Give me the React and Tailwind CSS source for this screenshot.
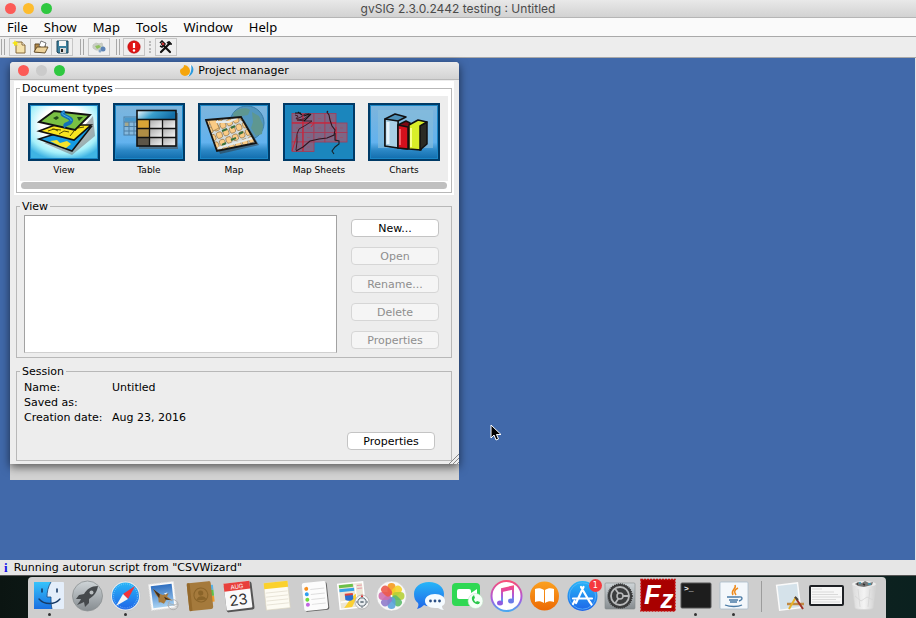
import React, { useState } from 'react'

const menus = ['File', 'Show', 'Map', 'Tools', 'Window', 'Help']

/* ---------- document type pictures (72 x 58) ---------- */

const Frame = ({ children, fill }) => (
    <svg viewBox="0 0 72 58" className="block w-full h-[58px]" aria-hidden="true">
        <defs>
            <radialGradient id="glow" cx="0.5" cy="0.35" r="0.7">
                <stop offset="0.5" stopColor="#fff" />
                <stop offset="0.8" stopColor="#a5f0fa" />
                <stop offset="1" stopColor="#3fb4e4" />
            </radialGradient>
            <linearGradient id="sky" x1="0" y1="0" x2="0" y2="1">
                <stop offset="0" stopColor="#7db5dc" />
                <stop offset="0.7" stopColor="#62b2ee" />
                <stop offset="0.86" stopColor="#2a86c4" />
                <stop offset="1" stopColor="#1470b0" />
            </linearGradient>
        </defs>
        <rect width="72" height="58" fill="#003a66" />
        <rect x="2" y="2" width="68" height="54" fill="#1a86c6" />
        <rect x="3" y="3" width="66" height="52" fill={fill} />
        {children}
    </svg>
)

const ViewPicture = () => (
    <Frame fill="url(#glow)">
        <path d="M16 40 L44 52 L67 33 L65 13 L50 30Z" fill="#777" opacity="0.55" />
        <path d="M11 36 L27 31 L63 24 L44 48Z" fill="#159be3" stroke="#111" strokeWidth="1.6" />
        <path d="M22 38l7-1 3 3 7-2 4 3-5 4-6-2z" fill="#f6e32b" />
        <path d="M11 28 L27 22 L63 22 L46 37Z" fill="#f8e520" stroke="#111" strokeWidth="1.6" />
        <path d="M20 28l6-2 4 2M31 31l5-3 5 1M42 33l4-5M24 26l9 1M50 25l6-1" stroke="#554c00" strokeWidth="1" fill="none" />
        <path d="M11 19 L26 8 L62 12 L47 27Z" fill="#79c043" stroke="#111" strokeWidth="1.8" />
        <path d="M37 9 C28 12 45 14 43 18 C42 22 35 20 38 24" fill="none" stroke="#1370b8" strokeWidth="4" />
        <path d="M36 9 C29 12 45 14 43 18" fill="none" stroke="#48b4ec" strokeWidth="1" />
        <path d="M25 15l4-2 2 2-3 2zM49 14l6 0-4 4z" fill="#234c1b" />
    </Frame>
)

const TablePicture = () => (
    <Frame fill="url(#sky)">
        <g opacity="0.75">
            <rect x="11" y="14" width="14" height="18" fill="#8fbbdb" stroke="#426c8d" />
            <rect x="11.5" y="14.500" width="13" height="4" fill="#3c8fc4" />
            <rect x="12" y="19" width="4" height="5" fill="#b9a671" />
            <path d="M11 19h14M11 23.500h14M11 28h14M16 19v13M21 19v13" stroke="#426c8d" />
        </g>
        <rect x="26" y="10" width="39" height="36" fill="#555" opacity="0.6" />
        <linearGradient id="head" x1="0" x2="1" y1="0" y2="0.3">
            <stop offset="0" stopColor="#fff" />
            <stop offset="0.5" stopColor="#3aa0cd" />
            <stop offset="1" stopColor="#1470a8" />
        </linearGradient>
        <linearGradient id="cell" x1="0" x2="1" y1="0" y2="1">
            <stop offset="0" stopColor="#aaa" />
            <stop offset="1" stopColor="#f4f4f4" />
        </linearGradient>
        <rect x="24" y="7" width="39" height="36" fill="#ddd" />
        <rect x="24" y="7" width="39" height="9" fill="url(#head)" />
        <rect x="24" y="16" width="13" height="9" fill="#d9a436" />
        <rect x="24" y="25" width="13" height="9" fill="#b08d45" />
        <rect x="24" y="34" width="13" height="9" fill="#5d5548" />
        {[37, 49].map((x) => [16, 25, 34].map((y) => (
            <rect key={`${x}-${y}`} x={x} y={y} width="13" height="9" fill="url(#cell)" />
        )))}
        <path d="M24 16.500h39M24 25.500h39M24 34.500h39M36.500 16v27M49.500 16v27" stroke="#111" strokeWidth="1.3" />
        <rect x="24" y="7.500" width="39" height="35.500" fill="none" stroke="#111" strokeWidth="1.6" />
    </Frame>
)

const MapPicture = () => (
    <Frame fill="url(#sky)">
        <circle cx="49" cy="20" r="17" fill="#5296bd" stroke="#3b7da6" />
        <path d="M35 10c5-5 14-6 17-3l-2 5-6 1-2 5-5 1zM54 9l7 4 4 9-1 9-6 2-5-8 2-6zM50 27l5 4-3 6z" fill="#5e9791" />
        <clipPath id="sheet"><path d="M8 17L43 14L58 40L19 48Z" /></clipPath>
        <path d="M12 21L46 17L61 42L22 51Z" fill="#333" opacity="0.5" />
        <path d="M8 17L43 14L58 40L19 48Z" fill="#d3dadb" />
        <g clipPath="url(#sheet)">
            <g transform="rotate(-22 32 31)" fill="#fbcb85" stroke="#96784c" strokeWidth="0.700">
                {[0, 1, 2, 3, 4, 5].map((r) => [0, 1, 2, 3, 4, 5, 6, 7].map((c) => (
                    <rect key={`${r}-${c}`} x={5 + c * 7} y={9 + r * 8} width="5.600" height="6.200" rx="2" />
                )))}
            </g>
            <path d="M10 16l8 1 3 8-6 3z" fill="#fbcb85" stroke="#96784c" strokeWidth="0.700" />
            <path d="M24 28l5-2M33 25l4-2M41 31l4-2M24 42l4-2M33 37l5-2" stroke="#39713c" strokeWidth="2" />
            <path d="M20 45L55 35M18 19l13 0 8-4" fill="none" stroke="#e5eaea" strokeWidth="2" />
        </g>
        <path d="M8 17L43 14L58 40L19 48Z" fill="none" stroke="#151515" strokeWidth="1.800" />
    </Frame>
)

const SheetsPicture = () => {
    const rows = [4, 5, 5, 2]
    return (
        <Frame fill="#1b86bd">
            {rows.map((count, r) => Array.from({ length: count }, (_, c) => (
                <g key={`${r}-${c}`}>
                    <rect x={9 + c * 11} y={10.5 + r * 9.5} width="11" height="9.500" fill="#7d6685" stroke="#a83a55" strokeWidth="0.8" />
                    <path d={`M${13 + c * 11} ${15.5 + r * 9.5}h3`} stroke="#a04f66" strokeWidth="0.7" />
                </g>
            )))}
            <path d="M9 20h44M20 11v37M31 20l-3 4M53 24v14M9 48l5-16" fill="none" stroke="#d61f32" strokeWidth="1" />
            <path d="M12 12l3 1-2 3 5-2 4-3 5 0-6 5-7 1 8 1 7 0-6 4-7 4-2 5 0 8-1 8" fill="none" stroke="#431c29" strokeWidth="1" />
            <path d="M12 10h6M15 9l4 3M21 13l5-2M28 11l-7 7" fill="none" stroke="#111" strokeWidth="1.1" />
            <path d="M13 48l7-4 7-6 9-2 8-1 7-3 1-5-3-4-2-6-1-5-2-3 1-1" fill="none" stroke="#30141e" strokeWidth="1.1" />
            <path d="M52 30v7l4 1 0 3-4 3-3 4 2 3" fill="none" stroke="#172027" strokeWidth="1.1" />
        </Frame>
    )
}

const ChartsPicture = () => (
    <Frame fill="url(#sky)">
        <rect x="10" y="7" width="55" height="38" fill="#86bcdc" opacity="0.7" />
        <g stroke="#111" strokeWidth="1.500" strokeLinejoin="round">
            <path d="M17 16l10-5 11 3-8 4v26l-13-1z" fill="#4f91b8" />
            <path d="M17 16l13 2v27l-13-2z" fill="#a9cfe5" />
            <path d="M30 22l8-4 4 2-2 26-10-1z" fill="#7d0912" />
            <path d="M30 22l10 2v22l-10-1z" fill="#d3101c" />
            <path d="M41 22l9-5 9 2-6 4v24l-12-1z" fill="#d9ee28" />
            <path d="M52 23l7-4v22l-7 6z" fill="#2b2b24" />
        </g>
        <path d="M20 19v22" stroke="#e6f3fb" strokeWidth="3" />
        <path d="M43 25v19" stroke="#f7ff8b" strokeWidth="2" />
        <path d="M32 26v16" stroke="#ff7078" strokeWidth="1.500" />
    </Frame>
)

const documentTypes = [
    { name: 'View', Picture: ViewPicture },
    { name: 'Table', Picture: TablePicture },
    { name: 'Map', Picture: MapPicture },
    { name: 'Map Sheets', Picture: SheetsPicture },
    { name: 'Charts', Picture: ChartsPicture },
]

/* ---------- toolbar ---------- */

const ToolIcon = ({ children }) => (
    <svg viewBox="0 0 16 14" className="w-4 h-[14px]" aria-hidden="true">{children}</svg>
)

const ToolButton = ({ label, children }) => (
    <button aria-label={label} className="flex items-center justify-center w-[22px] h-[18px] -mr-px border border-[#c6c6c6] bg-[#efefef]">
        <ToolIcon>{children}</ToolIcon>
    </button>
)

const Handle = () => <span className="w-1 h-4 border-x border-[#a8a8a8]" />

const Toolbar = () => (
    <div className="flex items-center h-[22px] pl-px border-y border-[#a9a9a9] bg-[#ededed]">
        <Handle />
        <div className="flex ml-1 mr-2">
            <ToolButton label="New project">
                <path d="M4 2h6l3 3v8H4z" fill="#f6e2ab" stroke="#85693a" />
                <path d="M10 2v3h3" fill="#fff" stroke="#85693a" />
                <path d="M3 0l1 2 2 0-1 2 1 2-2-1-2 1 0-2-2-1 2-1z" fill="#f5e416" />
            </ToolButton>
            <ToolButton label="Open project">
                <path d="M2 12V4h4l1 1h5v7z" fill="#b48b4a" stroke="#5f4724" />
                <path d="M6 6l2-5 5 2-2 6z" fill="#fff" stroke="#555" strokeWidth="0.8" />
                <path d="M1 12l3-5h11l-3 6z" fill="#edd29a" stroke="#5f4724" strokeWidth="0.9" />
            </ToolButton>
            <ToolButton label="Save project">
                <path d="M3 1h11v12H4l-1-1z" fill="#3a7f9d" stroke="#1f4459" />
                <rect x="5" y="1" width="7" height="5" fill="#f5f5f5" />
                <rect x="6" y="8" width="6" height="5" fill="#dadada" />
                <rect x="7" y="9" width="2" height="3" fill="#222" />
            </ToolButton>
        </div>
        <Handle />
        <div className="flex ml-1 mr-[7px]">
            <ToolButton label="Add-ons">
                <path d="M2 5l3-2 3 1 3-1 1 4-2 3-5 0-3-2z" fill="#c9cdc4" stroke="#c5cac0" />
                <path d="M4 6l4-1 2 2-4 2z" fill="#8fc15e" />
                <circle cx="12" cy="9" r="2.500" fill="#5b82b5" />
                <circle cx="9" cy="11" r="1.500" fill="#86a5c8" />
            </ToolButton>
        </div>
        <Handle />
        <div className="flex ml-[3px]">
            <ToolButton label="Show errors">
                <circle cx="8" cy="7" r="6.200" fill="#e01414" stroke="#b00909" strokeWidth="0.600" />
                <path d="M8 3v5" stroke="#fff" strokeWidth="2.200" />
                <circle cx="8" cy="10.500" r="1.200" fill="#fff" />
            </ToolButton>
        </div>
        <span className="w-px h-3 ml-[5px] mr-1 border-l-2 border-dotted border-[#bbb]" />
        <ToolButton label="Preferences">
            <path d="M4 4l8 8M12 3l-9 9" stroke="#111" strokeWidth="2.200" strokeLinecap="round" />
            <path d="M2 3l2-2 3 3-3 3-2-1M11 1l0 3 3 0M9 2l2 2" stroke="#111" strokeWidth="1.500" fill="none" />
            <circle cx="5" cy="4" r="1.300" fill="#c33" />
        </ToolButton>
    </div>
)

/* ---------- window parts ---------- */

const Lights = ({ middle }) => (
    <div className="flex gap-[7px]">
        <button aria-label="Close" className="w-[11px] h-[11px] rounded-full bg-[#fc5b57]" />
        <button aria-label="Minimize" className={`w-[11px] h-[11px] rounded-full ${middle}`} />
        <button aria-label="Zoom" className="w-[11px] h-[11px] rounded-full bg-[#2fc840]" />
    </div>
)

const PushButton = ({ children, disabled }) => (
    <button
        disabled={disabled}
        className="w-[88px] h-[18px] pt-px rounded-[4px] border border-[#c4c4c4] bg-white text-[11px] leading-[15px] text-black disabled:border-[#d6d6d6] disabled:bg-[#f5f5f5] disabled:text-[#8e8e8e]"
    >
        {children}
    </button>
)

const Group = ({ title, className, children }) => (
    <fieldset className={`min-w-0 border border-[#b8b8b8] ${className}`}>
        <legend className="ml-[3px] px-[2px] pt-[2px] text-[11px] leading-3">{title}</legend>
        {children}
    </fieldset>
)

const ProjectManager = () => {
    const [selected, setSelected] = useState('View')

    return (
        <section className="w-[449px] rounded-t-[4px] bg-[#d2d2d2] pb-4">
            <div className="relative rounded-t-[4px] bg-[#ededed] shadow-[0_3px_10px_rgba(0,0,0,0.6)]">
                <header className="grid grid-cols-[1fr_auto_1fr] items-center h-[18px] px-2 rounded-t-[4px] border-b border-[#b9b9b9] bg-linear-to-b from-[#ebebeb] to-[#d3d3d3]">
                    <Lights middle="bg-[#cbcbcb]" />
                    <h2 className="flex items-center gap-1 text-[11px] leading-4">
                        <svg viewBox="0 0 14 13" className="w-[14px] h-[13px]" aria-hidden="true">
                            <path d="M4 1c3 0 6 3 6 6a5 5 0 0 1-10 0c0-3 4-2 4-6z" fill="#f5a50c" />
                            <path d="M10 1c2 3 1 5 1 7s-1 3-3 4" fill="none" stroke="#fff" strokeWidth="1" />
                            <path d="M11 1c4 3 3 9-3 12 3-4 4-8 3-12z" fill="#2b9ade" />
                        </svg>
                        Project manager
                    </h2>
                </header>

                <div className="ml-1 mr-[5px] mt-px px-[2px] pb-[2px] bg-white">
                    <Group title="Document types" className="pb-[3px]">
                        <div className="mx-[3px]">
                            <div className="grid grid-cols-5 gap-[13px] h-[85px] mt-px px-2 pt-[7px] bg-[#ededed]">
                                {documentTypes.map(({ name, Picture }) => (
                                    <button
                                        key={name}
                                        aria-pressed={selected === name}
                                        onClick={() => setSelected(name)}
                                        className="self-start text-[9px] leading-[18px]"
                                    >
                                        <Picture />
                                        {name}
                                    </button>
                                ))}
                            </div>
                            <div className="h-[7px] mx-px mt-px rounded-full bg-[#c0c0c0]" />
                        </div>
                    </Group>
                </div>

                <div className="pl-[6px] pr-[7px] pt-1 pb-[3px]">
                    <Group title={selected} className="pb-1">
                        <div className="flex gap-[14px] pl-[7px] pr-3 -mt-px">
                            <ul aria-label="Documents" className="flex-1 h-[138px] mt-[3px] border border-[#a2a2a2] border-b-[#d0d0d0] bg-white" />
                            <div className="flex flex-col gap-[10px] pt-[7px]">
                                <PushButton>New...</PushButton>
                                <PushButton disabled>Open</PushButton>
                                <PushButton disabled>Rename...</PushButton>
                                <PushButton disabled>Delete</PushButton>
                                <PushButton disabled>Properties</PushButton>
                            </div>
                        </div>
                    </Group>

                    <Group title="Session" className="mt-[6px] pb-[10px]">
                        <dl className="grid grid-cols-[88px_1fr] mt-[2px] pl-[7px] text-[11px] leading-[15px]">
                            <dt>Name:</dt>
                            <dd>Untitled</dd>
                            <dt>Saved as:</dt>
                            <dd />
                            <dt>Creation date:</dt>
                            <dd>Aug 23, 2016</dd>
                        </dl>
                        <div className="flex justify-end mt-[7px] pr-4">
                            <PushButton>Properties</PushButton>
                        </div>
                    </Group>
                </div>
                <svg viewBox="0 0 10 10" className="absolute right-0 bottom-0 w-[10px] h-[10px]" aria-hidden="true">
                    <path d="M0 10L10 0M4 10l6-6M8 10l2-2" stroke="#888" />
                </svg>
            </div>
        </section>
    )
}

/* ---------- dock ---------- */

const petals = ['#f59a1f', '#f4d32a', '#b5cf38', '#5dbb6c', '#5ba3dc', '#8f7ccb', '#cf6fae', '#ec5a4c']

const dockApps = [
    {
        name: 'Finder', running: true, art: (
            <>
                <rect x="4" y="5" width="30" height="27" rx="1" fill="#e4eefa" />
                <path d="M4 5h17c-3 5-4 10-4 15h4c0 4 0 8 1 12H4z" fill="url(#finder)" />
                <path d="M12 12v3M27 12v3" stroke="#173a66" strokeWidth="1.600" strokeLinecap="round" />
                <path d="M9 22c5 6 16 6 21 0" fill="none" stroke="#173a66" strokeWidth="1.300" strokeLinecap="round" />
                <path d="M21 5c-3 5-4 10-4 15h4c0 4 0 8 1 12" fill="none" stroke="#1b4a80" strokeWidth="0.800" />
            </>
        ),
    },
    {
        name: 'Launchpad', art: (
            <>
                <circle cx="19.500" cy="19" r="15" fill="url(#silver)" stroke="#8b9092" strokeWidth="0.800" />
                <path d="M30 9c-7 0-11 3-14 8l-5 1-3 4 5 0-1 2-3 4 5-2 2-1 1 5 4-4 0-4c5-3 8-7 9-13z" fill="#45494c" />
                <circle cx="23.500" cy="15.500" r="2" fill="#b8bdbf" />
            </>
        ),
    },
    {
        name: 'Safari', running: true, art: (
            <>
                <circle cx="19.500" cy="19" r="15" fill="#e9ecee" stroke="#b5b8ba" strokeWidth="0.500" />
                <circle cx="19.500" cy="19" r="13.500" fill="url(#blue)" />
                <circle cx="19.500" cy="19" r="12" fill="none" stroke="#8fd0fb" strokeWidth="1.200" strokeDasharray="0.500 1.500" />
                <path d="M29 9L17 17l5 5z" fill="#f2333a" />
                <path d="M10 29l7-12 5 5z" fill="#f4f4f4" />
            </>
        ),
    },
    {
        name: 'Mail', art: (
            <g transform="rotate(-7 18 19)">
                <rect x="6" y="6" width="25" height="26" fill="#fbfbfb" stroke="#e5e5e5" strokeWidth="1" strokeDasharray="1.500 1" />
                <rect x="8" y="8" width="21" height="22" fill="url(#mail)" />
                <path d="M10 11l5 5 4 2 6-1-2 3 5 5-6-2-3 4-3-2-2 0 0-5-2-3z" fill="#a77a3c" />
                <path d="M10 11l6 6-1 4zM20 20l6 4-5-1z" fill="#3e2b18" />
                <path d="M20 17l4-1-2 2z" fill="#fff" />
                <circle cx="28" cy="29" r="5" fill="none" stroke="#aaa" strokeWidth="0.800" />
                <path d="M22 29h11M23 26l9 6" stroke="#aaa" strokeWidth="0.600" />
            </g>
        ),
    },
    {
        name: 'Contacts', art: (
            <g transform="rotate(-6 19 19)">
                <path d="M28 9h4v5h-4z" fill="#58b3e8" />
                <path d="M28 14h4v6h-4z" fill="#5bc24d" />
                <path d="M28 20h4v6h-4z" fill="#f19b2c" />
                <rect x="6" y="5" width="24" height="28" rx="2" fill="#a57a3c" />
                <rect x="6" y="5" width="3" height="28" rx="1" fill="#94692c" />
                <circle cx="19" cy="18" r="7" fill="none" stroke="#8a6429" strokeWidth="1" />
                <circle cx="19" cy="16" r="2.600" fill="#8a6429" />
                <path d="M14 23c1-5 9-5 10 0z" fill="#8a6429" />
            </g>
        ),
    },
    {
        name: 'Calendar', art: (
            <g transform="rotate(-7 19 19)">
                <rect x="5" y="6" width="28" height="28" rx="2" fill="#555" />
                <rect x="5" y="5" width="26" height="27" rx="1" fill="#fafafa" />
                <path d="M5 5h26v8H5z" fill="#e8403c" />
                <text x="18" y="11.500" fontSize="6" textAnchor="middle" fill="#fff" fontFamily="Inter, sans-serif">AUG</text>
                <text x="18" y="28" fontSize="15" textAnchor="middle" fill="#333" fontFamily="Inter, sans-serif">23</text>
            </g>
        ),
    },
    {
        name: 'Notes', art: (
            <g transform="rotate(-6 19 19)">
                <rect x="7" y="5" width="24" height="27" fill="#fdfbf3" stroke="#d8d2bd" strokeWidth="0.600" />
                <rect x="7" y="5" width="24" height="6" fill="#fbd12c" />
                <path d="M8 15h22M8 19h22M8 23h22M8 27h22" stroke="#e3dfd1" strokeWidth="0.800" />
            </g>
        ),
    },
    {
        name: 'Reminders', art: (
            <g transform="rotate(-6 19 19)">
                <rect x="8" y="6" width="24" height="28" rx="2" fill="#666" />
                <rect x="7" y="5" width="24" height="28" rx="2" fill="#fcfcfc" />
                <path d="M15 12h14M15 17h14M15 22h14M15 27h14" stroke="#ddd" />
                <circle cx="11" cy="11" r="2" fill="#f78f1e" />
                <circle cx="11" cy="16.500" r="2" fill="#2f9ff0" />
                <circle cx="11" cy="22" r="2" fill="#6fdc3c" />
                <circle cx="11" cy="27" r="2" fill="#c067e2" />
            </g>
        ),
    },
    {
        name: 'Maps', art: (
            <>
                <g transform="rotate(-6 18 19)">
                    <rect x="5" y="6" width="25" height="25" fill="#ece6d6" stroke="#fff" strokeWidth="1.500" />
                    <path d="M6 7h14v3H6z" fill="#6cc04a" />
                    <path d="M6 11h15v3H6z" fill="#38a3e6" />
                    <path d="M22 8v22M6 24h24" stroke="#fff" strokeWidth="1.500" />
                    <path d="M17 21l5-4v5l-5 8H9z" fill="#fbd034" />
                    <path d="M11 17h8v5c-2 2-6 2-8 0z" fill="#2b6fd0" />
                    <path d="M11 16h8v2h-8z" fill="#e0423a" />
                    <path d="M24 9h5M24 12h5" stroke="#e999a9" strokeWidth="1" />
                </g>
                <circle cx="28" cy="25" r="7" fill="#f3f3f3" stroke="#999" strokeWidth="0.600" />
                <circle cx="28" cy="25" r="4.200" fill="#e9edf0" stroke="#4d5b66" />
                <path d="M28 19v1M22 25h1M34 25h-1M28 31v-1M26 25h4M28 24v2" stroke="#4d5b66" strokeWidth="0.900" />
                <path d="M28 17l1 3h-2z" fill="#d22" />
            </>
        ),
    },
    {
        name: 'Photos', art: (
            <>
                <circle cx="19.500" cy="19" r="15" fill="#f8f8f8" stroke="#c5c5c5" strokeWidth="0.600" />
                {petals.map((color, i) => (
                    <rect key={color} x="15.500" y="6" width="8" height="12" rx="4" fill={color} opacity="0.9" transform={`rotate(${i * 45} 19.500 19)`} />
                ))}
            </>
        ),
    },
    {
        name: 'Messages', art: (
            <>
                <path d="M19 5c9 0 15 5 15 12s-6 12-15 12c-2 0-3 0-5-1-2 2-4 3-7 4 1-2 2-4 1-6-3-2-4-5-4-9C4 10 10 5 19 5z" fill="url(#blue)" />
                <path d="M25 17c6 0 10 3 10 7 0 3-1 4-3 5 0 2 1 3 2 4-2 0-4-1-6-2h-3c-6 0-10-3-10-7s4-7 10-7z" fill="#f5fbff" />
                <circle cx="20.500" cy="24" r="1.400" fill="#2a4f86" />
                <circle cx="25" cy="24" r="1.400" fill="#2a4f86" />
                <circle cx="29.500" cy="24" r="1.400" fill="#2a4f86" />
            </>
        ),
    },
    {
        name: 'FaceTime', art: (
            <>
                <rect x="3" y="6" width="28" height="23" rx="4" fill="#2fd853" />
                <rect x="8" y="12" width="14" height="10" rx="2" fill="#fff" />
                <path d="M22 16l6-4v10l-6-4z" fill="#fff" />
                <circle cx="26.500" cy="24" r="7.500" fill="#f5fff7" stroke="#b9dcc0" strokeWidth="0.500" />
                <path d="M23 20c-1 4 3 8 7 7l1-2-3-1-1 1c-1 0-2-2-2-3l1-1-1-3z" fill="#2cc84c" />
            </>
        ),
    },
    {
        name: 'iTunes', art: (
            <>
                <circle cx="19.500" cy="19" r="15" fill="#fff" stroke="url(#tunes)" strokeWidth="2" />
                <path d="M15 25V12l11-2.500V23" fill="none" stroke="url(#tunes)" strokeWidth="2" />
                <path d="M15 13.500l11-2.500" stroke="#e8489b" strokeWidth="3" />
                <ellipse cx="13" cy="26" rx="3" ry="2.500" fill="#8e5be0" />
                <ellipse cx="24" cy="24" rx="3" ry="2.500" fill="#6a7be8" />
            </>
        ),
    },
    {
        name: 'iBooks', art: (
            <>
                <circle cx="19.500" cy="19" r="14.500" fill="url(#orange)" />
                <path d="M19 13c-3-2-6-2-9-1v13c3-1 6-1 9 1zM20 13c3-2 6-2 9-1v13c-3-1-6-1-9 1z" fill="#fff" />
            </>
        ),
    },
    {
        name: 'App Store', badge: 1, art: (
            <>
                <circle cx="19.500" cy="19" r="15" fill="url(#blue)" />
                <circle cx="19.500" cy="19" r="13.200" fill="none" stroke="#5db4f7" strokeWidth="0.800" />
                <path d="M20.500 10L13 26M18 10l9 15.500M10 21.500h19M11.500 24l-1.500 3M27 25l1.500 2.500" stroke="#fff" strokeWidth="2.200" strokeLinecap="round" />
            </>
        ),
    },
    {
        name: 'System Preferences', art: (
            <>
                <rect x="4" y="6" width="30" height="26" rx="1" fill="url(#silver)" stroke="#84898b" strokeWidth="0.600" />
                <circle cx="19" cy="19" r="12" fill="#3b3d3e" stroke="#333" strokeWidth="1.500" strokeDasharray="1 1" />
                <circle cx="19" cy="19" r="9" fill="none" stroke="#b7b9ba" strokeWidth="1.800" />
                <circle cx="19" cy="19" r="3" fill="none" stroke="#b7b9ba" strokeWidth="1.500" />
                <path d="M22 19h6M17.500 21.500l-3.500 5M17.500 16.500l-3.500-5" stroke="#b7b9ba" strokeWidth="1.800" />
            </>
        ),
    },
    {
        name: 'FileZilla', art: (
            <>
                <rect x="2" y="2.500" width="34" height="31.500" fill="#a80000" stroke="#c40f0f" strokeWidth="1.500" strokeDasharray="2 1" />
                <text x="5" y="27" fontSize="27" fontWeight="700" fontStyle="italic" fill="#fff" fontFamily="'Liberation Sans', sans-serif">
                    F<tspan dy="4" fontSize="26">z</tspan>
                </text>
            </>
        ),
    },
    {
        name: 'Terminal', running: true, art: (
            <>
                <rect x="4" y="6" width="30" height="25" rx="1" fill="#1d1d1d" stroke="#555" strokeWidth="1" />
                <text x="7" y="14" fontSize="8" fontWeight="700" fill="#eee" fontFamily="'Liberation Mono', monospace">&gt;_</text>
            </>
        ),
    },
    {
        name: 'Java', running: true, art: (
            <>
                <rect x="5" y="5" width="28" height="27" rx="1" fill="#f3f7fb" stroke="#a9bccb" strokeWidth="0.800" />
                <path d="M20 8c2 4-5 5-2 10M23 11c-4 2-4 4-2 7" fill="none" stroke="#ee8a1c" strokeWidth="1.500" />
                <path d="M12 20h12M14 23h9M15 25h7M10 28c5 2 13 2 17 0M24 20c4-1 4 3 0 4" fill="none" stroke="#4a7ba6" strokeWidth="1.300" />
            </>
        ),
    },
]

const dockFiles = [
    {
        name: 'Applications', art: (
            <>
                <rect x="8" y="7" width="21" height="25" fill="#d5e2ea" stroke="#fafafa" strokeWidth="1.500" transform="rotate(-7 19 19)" />
                <path d="M17 27h17" stroke="#c08a45" strokeWidth="2.500" />
                <path d="M25 20l8 12" stroke="#9e3226" strokeWidth="2" />
                <path d="M26 20l-7 12" stroke="#e6b12a" strokeWidth="2" />
                <path d="M25 20l3 3" stroke="#444" strokeWidth="2" />
            </>
        ),
    },
    {
        name: 'Minimized window', art: (
            <>
                <rect x="2" y="9" width="33" height="19" rx="1" fill="#f7f7f7" stroke="#1d2024" strokeWidth="2" />
                <path d="M4 12h10M4 15h22M4 17.500h26M4 20h29M4 22.500h24M4 25h28" stroke="#d2d2d2" strokeWidth="0.800" />
            </>
        ),
    },
    {
        name: 'Trash', art: (
            <>
                <path d="M6 7h24l-3 24c-1 2-17 2-18 0z" fill="url(#trash)" stroke="#d5d5d5" strokeWidth="0.600" />
                <path d="M12 12l2 18M24 12l-2 18M9 19l6 5 6-4 6 3" stroke="#d3d3d3" strokeWidth="0.700" fill="none" />
                <ellipse cx="18" cy="7" rx="12" ry="3" fill="#eee" />
                <path d="M9 7l3-2 4 1 3-2 4 2 4-1-1 3-8 2-6-1z" fill="#777" />
                <path d="M13 6l2 0M22 7h3" stroke="#3c9bb5" strokeWidth="1.500" />
                <path d="M17 7l2 1M11 7h1" stroke="#333" strokeWidth="1.500" />
            </>
        ),
    },
]

const DockItem = ({ name, art, running, badge }) => (
    <button aria-label={name} className="relative flex-1 flex flex-col items-center">
        <svg viewBox="0 0 38 36" className="w-[38px] h-9" aria-hidden="true">{art}</svg>
        {running && <span className="w-[3px] h-[3px] rounded-full bg-[#333]" />}
        {badge && (
            <span className="absolute -right-px top-[2px] w-[13px] h-[13px] rounded-full bg-[#f5393d] text-white text-[8px] leading-[13px]">
                {badge}
            </span>
        )}
    </button>
)

const Dock = () => (
    <div className="bg-[linear-gradient(90deg,#0b1512,#14221f_20%,#14221f_80%,#0b211f)] pl-7 pr-[30px] pt-px">
        <svg className="absolute w-0 h-0" aria-hidden="true">
            <defs>
                <linearGradient id="finder" x2="0" y2="1"><stop stopColor="#35c3fb" /><stop offset="1" stopColor="#1a6fe0" /></linearGradient>
                <linearGradient id="silver" x2="0" y2="1"><stop stopColor="#cfd5d8" /><stop offset="1" stopColor="#868c90" /></linearGradient>
                <linearGradient id="blue" x2="0" y2="1"><stop stopColor="#27b6f8" /><stop offset="1" stopColor="#1f65e8" /></linearGradient>
                <linearGradient id="mail" x2="0" y2="1"><stop stopColor="#2f6fc0" /><stop offset="1" stopColor="#a8d2f2" /></linearGradient>
                <linearGradient id="tunes" x2="0" y2="1"><stop stopColor="#f84f78" /><stop offset="0.6" stopColor="#a95ae0" /><stop offset="1" stopColor="#4aa8f0" /></linearGradient>
                <linearGradient id="orange" x2="0" y2="1"><stop stopColor="#fba01f" /><stop offset="1" stopColor="#ec6a05" /></linearGradient>
                <linearGradient id="trash" x2="1" y2="0"><stop stopColor="#dadada" /><stop offset="0.5" stopColor="#f4f4f4" /><stop offset="1" stopColor="#cfcfcf" /></linearGradient>
            </defs>
        </svg>
        <nav aria-label="Dock" className="flex h-[41px] px-[2px] rounded-t-[4px] bg-[#cecece]">
            {dockApps.map((app) => <DockItem key={app.name} {...app} />)}
            <span className="w-px h-[31px] mx-2 mt-1 bg-[#9c9c9c]" />
            {dockFiles.map((file) => <DockItem key={file.name} {...file} />)}
        </nav>
    </div>
)

export default function App() {
    return (
        <div className="flex flex-col min-h-screen bg-[#ededed] font-['DejaVu_Sans',sans-serif] text-black">
            <header className="grid grid-cols-[1fr_auto_1fr] items-center h-[18px] px-[5px] border-b border-[#b5b5b5] bg-linear-to-b from-[#e9e9e9] to-[#d2d2d2]">
                <Lights middle="bg-[#fdbc2e]" />
                <h1 className="font-[Inter,sans-serif] text-[12px] leading-4 text-[#4a4a4a]">gvSIG 2.3.0.2442 testing : Untitled</h1>
            </header>
            <nav className="flex items-center gap-4 h-[18px] px-[7px] bg-[#fafafa] font-['Noto_Sans',sans-serif] text-[13px] leading-[18px]">
                {menus.map((menu) => <button key={menu}>{menu}</button>)}
            </nav>
            <Toolbar />

            <main className="relative flex-1 pl-[10px] pt-1 pb-10 border-r border-[#e4e4e4] bg-[#4169aa]">
                <ProjectManager />
                <svg viewBox="0 0 12 17" className="absolute left-[490px] top-[366px] w-3 h-[17px]" aria-hidden="true">
                    <path d="M1 1v13l3-3 2 5 2.500-1-2-4.500H11z" fill="#000" stroke="#fff" />
                </svg>
            </main>

            <footer className="flex items-center gap-[6px] h-4 pt-px px-1 bg-[#e6e6e6] border-b border-[#555] text-[11px] leading-[14px]">
                <b className="font-['Liberation_Serif',serif] text-[13px] text-[#1414e6]">i</b>
                <p>Running autorun script from "CSVWizard"</p>
            </footer>
            <Dock />
        </div>
    )
}
